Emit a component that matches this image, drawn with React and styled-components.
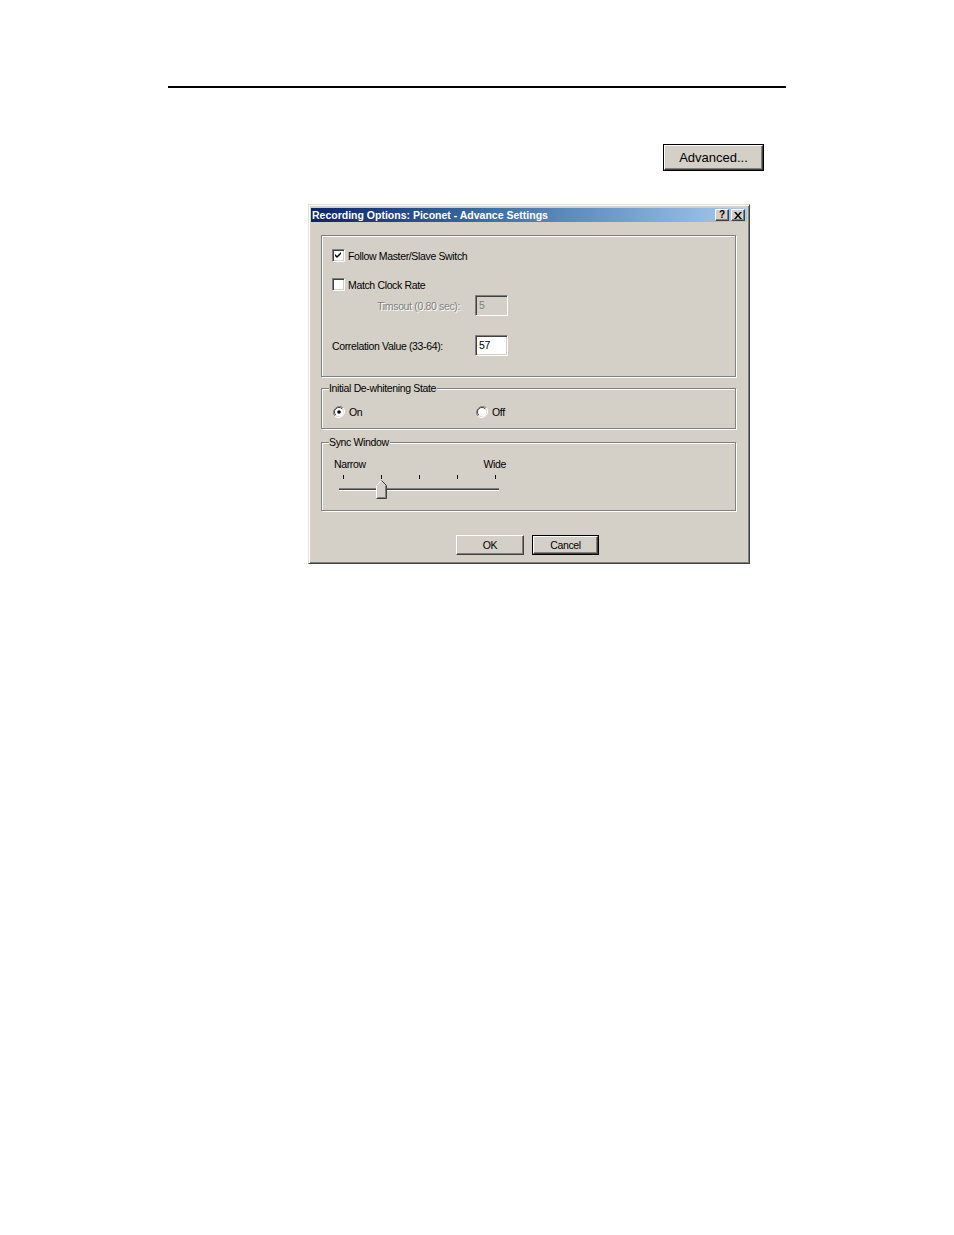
import React from "react";
import styled, { createGlobalStyle, css } from "styled-components";

const Global = createGlobalStyle`
  html, body { margin: 0; padding: 0; background: #fff; }
  body { font-family: "Liberation Sans", Arial, sans-serif; }
  * { box-sizing: border-box; }
`;

const Page = styled.div`
  width: 954px;
  height: 1235px;
  padding-top: 86px;
  background: #fff;
`;

const Rule = styled.div`
  margin-left: 168px;
  width: 618px;
  height: 2px;
  background: #000;
`;

const AdvancedRow = styled.div`
  margin-top: 56px;
  padding-left: 663px;
  display: flex;
`;

const raised = css`
  background: #d4d0c8;
  border: 1px solid;
  border-color: #fff #404040 #404040 #fff;
  box-shadow: inset -1px -1px 0 #808080;
`;

const AdvancedButton = styled.div`
  width: 101px;
  height: 27px;
  border: 1px solid #000;
  display: flex;
`;

const AdvancedFace = styled.div`
  ${raised};
  flex: 1;
  display: flex;
  align-items: center;
  justify-content: center;
  font-size: 13px;
  color: #000;
  padding-bottom: 1px;
`;

const Dialog = styled.div`
  margin-top: 33px;
  margin-left: 308px;
  width: 442px;
  height: 360px;
  background: #d4d0c8;
  border: 1px solid;
  border-color: #e4e2dc #404040 #404040 #e4e2dc;
  box-shadow: inset 1px 1px 0 #fff, inset -1px -1px 0 #808080;
  padding: 3px 2px 2px 2px;
  display: flex;
  flex-direction: column;
  font-size: 10.5px;
  letter-spacing: -0.35px;
  color: #000;
`;

const TitleBar = styled.div`
  height: 14px;
  background: linear-gradient(to right, #0a246a 0%, #3a6ea5 40%, #a6caf0 100%);
  display: flex;
  align-items: center;
  padding: 0 2px 0 1px;
`;

const TitleText = styled.div`
  flex: 1;
  color: #fff;
  font-weight: bold;
  font-size: 10.5px;
  letter-spacing: 0;
  line-height: 14px;
  white-space: nowrap;
`;

const TitleButtons = styled.div`
  display: flex;
  gap: 2px;
`;

const TitleButton = styled.div`
  ${raised};
  width: 14px;
  height: 12px;
  display: flex;
  align-items: center;
  justify-content: center;
  font-weight: bold;
  font-size: 10px;
  line-height: 10px;
  color: #000;
`;

const Body = styled.div`
  padding: 13px 11px 0 10px;
  display: flex;
  flex-direction: column;
`;

const Group = styled.div`
  position: relative;
  height: ${(p) => p.$h}px;
  margin-top: ${(p) => p.$mt || 0}px;
  border: 1px solid #808080;
  box-shadow: inset 1px 1px 0 #fff, 1px 1px 0 #fff;
  display: flex;
  flex-direction: column;
  padding: ${(p) => p.$pad || "0"};
`;

const Legend = styled.div`
  position: absolute;
  left: 7px;
  top: -7px;
  padding: 0 1px 0 0;
  background: #d4d0c8;
  line-height: 12px;
  white-space: nowrap;
`;

const Row = styled.div`
  display: flex;
  align-items: center;
  height: ${(p) => p.$h || 13}px;
  margin-top: ${(p) => p.$mt || 0}px;
  padding-left: ${(p) => p.$pl || 0}px;
`;

const sunken = css`
  border: 1px solid;
  border-color: #808080 #fff #fff #808080;
  box-shadow: inset 1px 1px 0 #404040, inset -1px -1px 0 #d4d0c8;
`;

const CheckBox = styled.div`
  ${sunken};
  width: 13px;
  height: 13px;
  background: #fff;
  display: flex;
  align-items: center;
  justify-content: center;
  margin-right: 3px;
`;

const Label = styled.span`
  color: ${(p) => (p.$disabled ? "#808080" : "#000")};
  white-space: nowrap;
  width: ${(p) => (p.$w ? `${p.$w}px` : "auto")};
  text-align: ${(p) => p.$align || "left"};
  text-shadow: ${(p) => (p.$disabled ? "1px 1px 0 #fff" : "none")};
`;

const TextBox = styled.div`
  ${sunken};
  width: 33px;
  height: ${(p) => p.$h || 21}px;
  background: ${(p) => (p.$disabled ? "#d4d0c8" : "#fff")};
  color: ${(p) => (p.$disabled ? "#808080" : "#000")};
  padding: 2px 3px;
  line-height: 14px;
  margin-left: ${(p) => p.$ml || 0}px;
`;

const RadioWrap = styled.div`
  display: flex;
  align-items: center;
  width: ${(p) => p.$w || "auto"}px;
  gap: 4px;
`;

const SliderArea = styled.div`
  padding: 15px 0 0 12px;
  display: flex;
  flex-direction: column;
  width: 190px;
`;

const SliderLabels = styled.div`
  display: flex;
  justify-content: space-between;
  width: 172px;
  line-height: 12px;
`;

const SliderSvg = styled.svg`
  display: block;
  margin: 5px 0 0 5px;
`;

const ButtonRow = styled.div`
  display: flex;
  gap: 8px;
  padding-left: 135px;
  margin-top: 24px;
`;

const DlgButton = styled.div`
  width: ${(p) => p.$w}px;
  height: 20px;
  display: flex;
  border: ${(p) => (p.$default ? "1px solid #000" : "none")};
`;

const DlgFace = styled.div`
  ${raised};
  flex: 1;
  display: flex;
  align-items: center;
  justify-content: center;
`;

function Check() {
  return (
    <svg width="9" height="9" viewBox="0 0 9 9">
      <path d="M1 3 L3 5 L7 1 L7 3 L3 7 L1 5 Z" fill="#000" />
    </svg>
  );
}

function Radio({ on }) {
  return (
    <svg width="12" height="12" viewBox="0 0 12 12">
      <path d="M10.2 1.8 A6 6 0 0 0 1.8 10.2" fill="none" stroke="#808080" strokeWidth="1" />
      <path d="M1.8 10.2 A6 6 0 0 0 10.2 1.8" fill="none" stroke="#fff" strokeWidth="1" />
      <circle cx="6" cy="6" r="4.5" fill="#fff" />
      <path d="M9.2 2.8 A4.5 4.5 0 0 0 2.8 9.2" fill="none" stroke="#404040" strokeWidth="1" />
      {on && <circle cx="6" cy="6" r="1.8" fill="#000" />}
    </svg>
  );
}

function Slider() {
  const ticks = [4, 42, 80, 118, 156];
  return (
    <SliderSvg width="172" height="26" viewBox="0 0 172 26">
      {ticks.map((x) => (
        <line key={x} x1={x + 0.5} y1="0" x2={x + 0.5} y2="4" stroke="#000" strokeWidth="1" />
      ))}
      <line x1="0" y1="13.5" x2="160" y2="13.5" stroke="#808080" strokeWidth="1" />
      <line x1="0" y1="14.5" x2="160" y2="14.5" stroke="#404040" strokeWidth="1" />
      <line x1="0" y1="15.5" x2="160" y2="15.5" stroke="#fff" strokeWidth="1" />
      <path d="M37.5 23.5 L37.5 10.5 L42.5 5.5 L47.5 10.5 L47.5 23.5 Z" fill="#d4d0c8" />
      <path d="M37.5 23.5 L37.5 10.5 L42.5 5.5" fill="none" stroke="#fff" strokeWidth="1" />
      <path d="M42.5 5.5 L47.5 10.5 L47.5 23.5 L37.5 23.5" fill="none" stroke="#404040" strokeWidth="1" />
      <path d="M46.5 10.5 L46.5 22.5 L38.5 22.5" fill="none" stroke="#808080" strokeWidth="1" />
    </SliderSvg>
  );
}

function CloseGlyph() {
  return (
    <svg width="8" height="7" viewBox="0 0 8 7">
      <path d="M0 0 L2 0 L4 2.5 L6 0 L8 0 L5 3.5 L8 7 L6 7 L4 4.5 L2 7 L0 7 L3 3.5 Z" fill="#000" />
    </svg>
  );
}

export default function App() {
  return (
    <Page>
      <Global />
      <Rule />
      <AdvancedRow>
        <AdvancedButton>
          <AdvancedFace>Advanced...</AdvancedFace>
        </AdvancedButton>
      </AdvancedRow>
      <Dialog>
        <TitleBar>
          <TitleText>Recording Options: Piconet - Advance Settings</TitleText>
          <TitleButtons>
            <TitleButton>?</TitleButton>
            <TitleButton>
              <CloseGlyph />
            </TitleButton>
          </TitleButtons>
        </TitleBar>
        <Body>
          <Group $h={142} $pad="13px 0 0 10px">
            <Row>
              <CheckBox>
                <Check />
              </CheckBox>
              <Label>Follow Master/Slave Switch</Label>
            </Row>
            <Row $mt={16}>
              <CheckBox />
              <Label>Match Clock Rate</Label>
            </Row>
            <Row $h={21} $mt={4}>
              <Label $disabled $w={128} $align="right">Timsout (0.80 sec):</Label>
              <TextBox $disabled $ml={15}>5</TextBox>
            </Row>
            <Row $h={21} $mt={19}>
              <Label $w={143}>Correlation Value (33-64):</Label>
              <TextBox>57</TextBox>
            </Row>
          </Group>
          <Group $h={41} $mt={11} $pad="17px 0 0 11px">
            <Legend>Initial De-whitening State</Legend>
            <Row $h={12}>
              <RadioWrap $w={143}>
                <Radio on />
                <Label>On</Label>
              </RadioWrap>
              <RadioWrap>
                <Radio />
                <Label>Off</Label>
              </RadioWrap>
            </Row>
          </Group>
          <Group $h={69} $mt={13}>
            <Legend>Sync Window</Legend>
            <SliderArea>
              <SliderLabels>
                <span>Narrow</span>
                <span>Wide</span>
              </SliderLabels>
              <Slider />
            </SliderArea>
          </Group>
          <ButtonRow>
            <DlgButton $w={68}>
              <DlgFace>OK</DlgFace>
            </DlgButton>
            <DlgButton $w={67} $default>
              <DlgFace>Cancel</DlgFace>
            </DlgButton>
          </ButtonRow>
        </Body>
      </Dialog>
    </Page>
  );
}
